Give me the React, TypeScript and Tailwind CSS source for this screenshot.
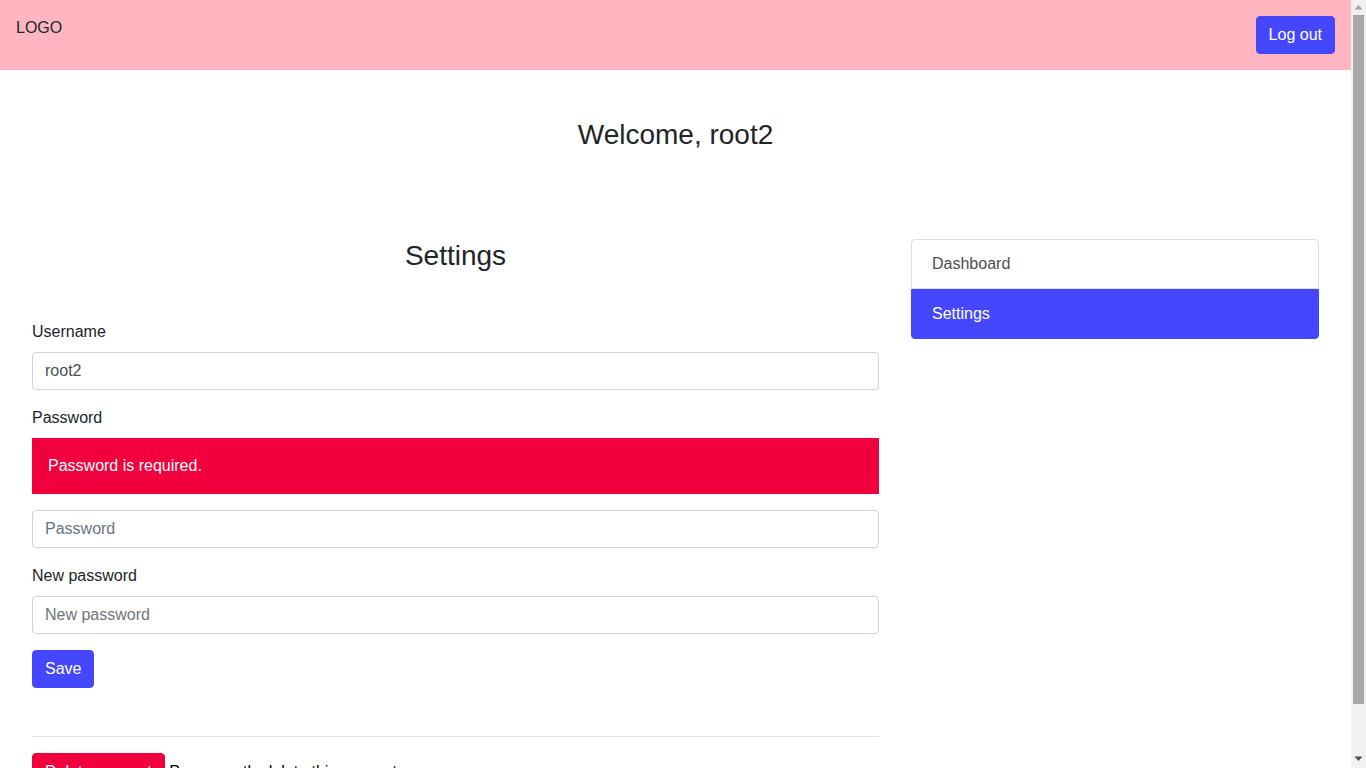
function ScrollBar() {
  return (
    <div className="w-[15px] shrink-0 h-full bg-[#f1f1f1] flex flex-col items-center">
      <svg width="15" height="15" viewBox="0 0 15 15" className="shrink-0">
        <path d="M3.5 9.5 L7.5 5 L11.5 9.5 Z" fill="#a3a3a3" />
      </svg>
      <div className="w-[11px] h-[689px] bg-[#a8a8a8] shrink-0" />
      <div className="flex-1" />
      <svg width="15" height="15" viewBox="0 0 15 15" className="shrink-0 mb-[2px]">
        <path d="M3.5 5.5 L7.5 10 L11.5 5.5 Z" fill="#505050" />
      </svg>
    </div>
  );
}

export default function App() {
  return (
    <div className="h-screen flex overflow-hidden bg-white text-[#212529] text-base leading-6 font-['Liberation_Sans',Arial,sans-serif]">
      <main className="flex-1 min-w-0 overflow-hidden">
        <header className="h-[70px] bg-[#ffb6c1] flex justify-between items-start p-4">
          <span>LOGO</span>
          <button className="bg-[#4547ff] text-white px-3 py-1.5 border border-[#4547ff] rounded">Log out</button>
        </header>

        <h2 className="text-center text-[28px] leading-[1.2] font-normal mt-12 mb-12">Welcome, root2</h2>

        <div className="grid grid-cols-[minmax(0,847fr)_minmax(0,408fr)] gap-8 px-8 pt-[39px] pb-7">
          <div>
            <h3 className="text-center text-[28px] leading-[1.2] font-normal mb-[48px]">Settings</h3>

            <form className="flex flex-col">
              <label className="mb-2">Username</label>
              <input
                className="h-[38px] border border-[#ced4da] rounded px-3 text-[#495057] outline-none mb-4"
                defaultValue="root2"
              />

              <label className="mb-2">Password</label>
              <div className="bg-[#f0003c] text-white px-4 py-4 mb-4">Password is required.</div>
              <input
                type="password"
                className="h-[38px] border border-[#ced4da] rounded px-3 text-[#495057] placeholder:text-[#6c757d] outline-none mb-4"
                placeholder="Password"
              />

              <label className="mb-2">New password</label>
              <input
                type="password"
                className="h-[38px] border border-[#ced4da] rounded px-3 text-[#495057] placeholder:text-[#6c757d] outline-none mb-4"
                placeholder="New password"
              />

              <div>
                <button type="button" className="bg-[#4547ff] text-white px-3 py-1.5 border border-[#4547ff] rounded">
                  Save
                </button>
              </div>
            </form>

            <hr className="mt-12 mb-4 border-t border-[#e2e2e2]" />

            <div className="text-black">
              <button className="bg-[#f0003c] text-white px-3 py-1.5 border border-[#f0003c] rounded">Delete account</button>{' '}
              Permanently delete this account
            </div>
          </div>

          <div>
            <div className="flex flex-col">
              <a className="px-5 py-3 border border-[#dfdfdf] rounded-t text-[#495057]">Dashboard</a>
              <a className="px-5 py-3 border border-[#4547ff] bg-[#4547ff] rounded-b text-white">Settings</a>
            </div>
          </div>
        </div>
      </main>
      <ScrollBar />
    </div>
  );
}
